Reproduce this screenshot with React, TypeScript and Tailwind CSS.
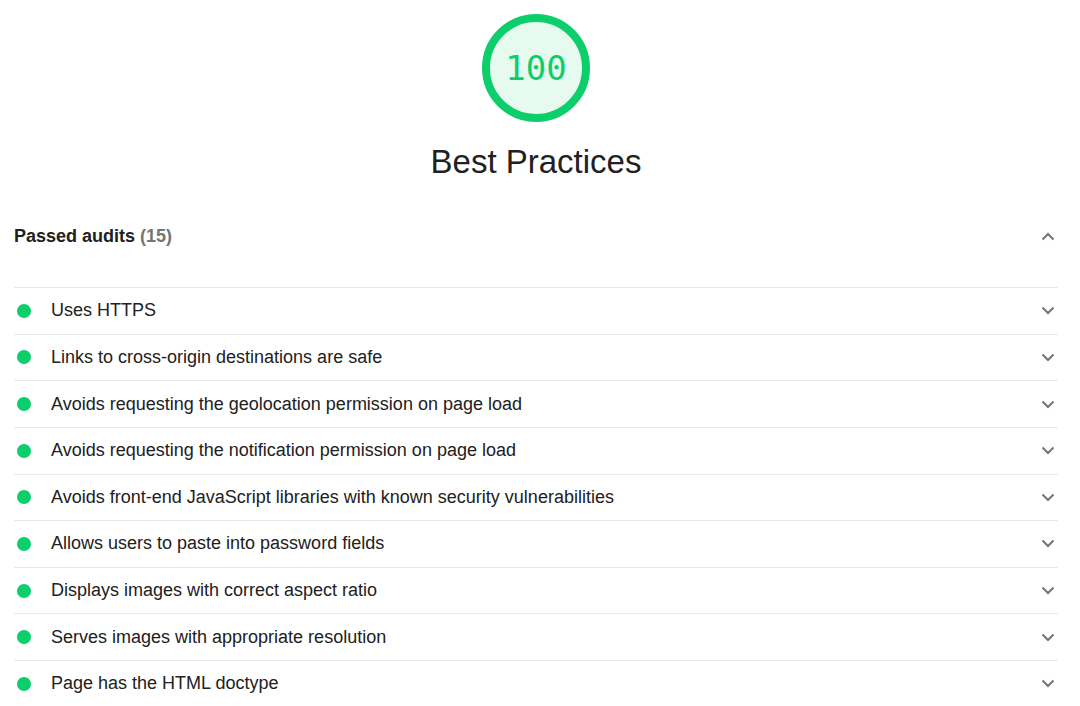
import React from "react";

const audits = [
  "Uses HTTPS",
  "Links to cross-origin destinations are safe",
  "Avoids requesting the geolocation permission on page load",
  "Avoids requesting the notification permission on page load",
  "Avoids front-end JavaScript libraries with known security vulnerabilities",
  "Allows users to paste into password fields",
  "Displays images with correct aspect ratio",
  "Serves images with appropriate resolution",
  "Page has the HTML doctype",
];

const Chevron = ({ up = false }: { up?: boolean }) => (
  <svg width="14" height="9" viewBox="0 0 14 9" className={up ? "rotate-180" : ""}>
    <path d="M1.5 1.5 L7 7 L12.5 1.5" fill="none" stroke="#757575" strokeWidth="2" />
  </svg>
);

const Gauge = () => (
  <div className="relative w-[108px] h-[108px]">
    <svg width="108" height="108" viewBox="0 0 108 108">
      <circle cx="54" cy="54" r="50" fill="#e7faf0" stroke="#0cce6b" strokeWidth="8" />
    </svg>
    <div className="absolute inset-0 flex items-center justify-center font-['DejaVu_Sans_Mono',monospace] text-[34px] text-[#0cce6b]">
      100
    </div>
  </div>
);

export default function App() {
  return (
    <div className="w-[1080px] h-[706px] overflow-hidden bg-white font-['Liberation_Sans',Arial,sans-serif] text-[#212121]">
      <div className="w-[1072px] flex flex-col items-center pt-[14px]">
        <Gauge />
        <h1 className="mt-[20px] text-[33px] leading-[40px] text-[#212121]">Best Practices</h1>
      </div>

      <div className="px-[14px] w-[1072px]">
        <div className="mt-[42px] flex items-center justify-between h-[24px] pr-[3px]">
          <div className="text-[18px] font-bold">
            Passed audits <span className="text-[#757575]">(15)</span>
          </div>
          <Chevron up />
        </div>

        <div className="mt-[39px]">
          {audits.map((a) => (
            <div
              key={a}
              className="h-[46.625px] border-t border-[#e8e8e8] flex items-center pr-[3px]"
            >
              <span className="w-[14px] h-[14px] rounded-full bg-[#0cce6b] ml-[3px]" />
              <span className="ml-[20px] text-[18px] flex-1">{a}</span>
              <Chevron />
            </div>
          ))}
        </div>
      </div>
    </div>
  );
}
